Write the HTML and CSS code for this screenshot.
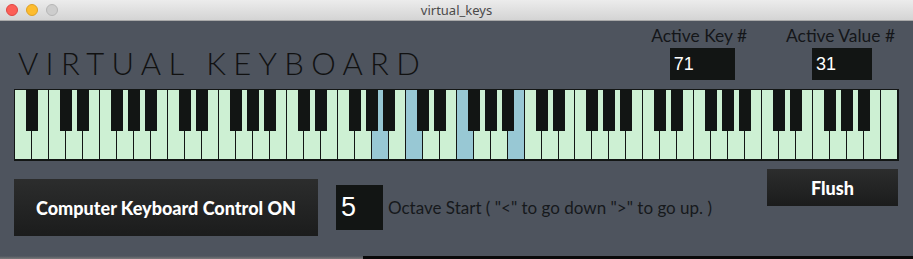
FILE: index.html
```html
<!DOCTYPE html>
<html lang="en">
<head>
    <meta charset="UTF-8">
    <title>virtual_keys</title>
    <link rel="stylesheet" href="styles.css">
</head>
<body>

    <!-- Fensterleiste -->
    <div class="titlebar">
        <div class="lights">
            <span class="light red"></span>
            <span class="light yellow"></span>
            <span class="light gray"></span>
        </div>
        <div class="title">virtual_keys</div>
    </div>

    <div class="main">
        <div class="top-row">
            <h1 class="heading">VIRTUAL KEYBOARD</h1>
            <div class="readouts">
                <div class="readout">
                    <div class="readout-label">Active Key #</div>
                    <div class="readout-box key-box">71</div>
                </div>
                <div class="readout">
                    <div class="readout-label">Active Value #</div>
                    <div class="readout-box value-box">31</div>
                </div>
            </div>
        </div>

        <!-- Tasten werden per Script erzeugt -->
        <div id="keyboard" class="keyboard"></div>

        <div class="bottom-row">
            <div class="control-group">
                <button class="dark-button control-button">Computer Keyboard Control ON</button>
                <div class="octave-box">5</div>
                <span class="octave-text">Octave Start ( "&lt;" to go down "&gt;" to go up. )</span>
            </div>
            <button class="dark-button flush-button">Flush</button>
        </div>
    </div>

    <div class="bottom-edge">
        <div class="edge-left"></div>
        <div class="edge-right"></div>
    </div>

    <script>
        // 88 Tasten, Start bei A0: 52 weisse Tasten
        var whiteNotes = ['A', 'B', 'C', 'D', 'E', 'F', 'G'];
        var withBlack = ['A', 'C', 'D', 'F', 'G'];
        var active = [21, 23, 26, 29];
        var keyboard = document.getElementById('keyboard');

        for (var i = 0; i < 52; i++) {
            var note = whiteNotes[i % 7];
            var key = document.createElement('div');
            key.className = 'white-key';
            if (active.indexOf(i) !== -1) {
                key.classList.add('active');
            }
            if (withBlack.indexOf(note) !== -1 && i < 51) {
                var black = document.createElement('div');
                black.className = 'black-key';
                key.appendChild(black);
            }
            keyboard.appendChild(key);
        }
    </script>

</body>
</html>
```

FILE: styles.css
```css
body {
    margin: 0;
    padding: 0;
    width: 913px;
    height: 259px;
    overflow: hidden;
    background-color: #4e545e;
    font-family: 'Lato', 'Liberation Sans', sans-serif;
}

/* Fensterleiste */
.titlebar {
    height: 20px;
    background: linear-gradient(#ececec, #d4d4d4);
    border-bottom: 1px solid #a9a9a9;
    position: relative;
    display: flex;
    align-items: center;
    justify-content: center;
}

.lights {
    position: absolute;
    left: 6px;
    top: 4px;
    display: flex;
    gap: 8px;
}

.light {
    width: 12px;
    height: 12px;
    border-radius: 50%;
    box-sizing: border-box;
}

.red {
    background-color: #fc5f57;
    border: 1px solid #df4744;
}

.yellow {
    background-color: #fdbc2e;
    border: 1px solid #dea123;
}

.gray {
    background-color: #cdcdcd;
    border: 1px solid #b6b6b6;
}

.title {
    font-family: 'Noto Sans', sans-serif;
    font-size: 13px;
    color: #4a4a4a;
}

.main {
    height: 235px;
    padding: 0 14px;
}

.top-row {
    height: 68px;
    display: flex;
    justify-content: space-between;
    align-items: flex-end;
}

.heading {
    margin: 0 0 7px 4px;
    font-size: 31px;
    font-weight: 300;
    letter-spacing: 7.3px;
    line-height: 1.2;
    color: #111;
}

.readouts {
    display: flex;
    gap: 39px;
    margin: 0 4px 9px 0;
}

.readout {
    display: flex;
    flex-direction: column;
    align-items: center;
}

.readout-label {
    font-size: 17.4px;
    line-height: 22px;
    color: #141619;
    margin-bottom: 1px;
}

.readout-box {
    height: 32px;
    line-height: 32px;
    background-color: #121514;
    color: white;
    font-family: 'Liberation Sans', sans-serif;
    font-size: 18px;
    padding-left: 4px;
    box-sizing: border-box;
}

.key-box {
    width: 65px;
    margin-left: 6px;
}

.value-box {
    width: 60px;
    margin-left: 3px;
}

/* Klaviatur */
.keyboard {
    width: 885px;
    height: 72px;
    box-sizing: border-box;
    padding: 1px 2px 2px 1px;
    background-color: #131615;
    display: flex;
    gap: 1px;
}

.white-key {
    flex: 1;
    position: relative;
    background-color: #cdf0d3;
}

.white-key.active {
    background-color: #98c8d4;
}

.black-key {
    position: absolute;
    top: -1px;
    right: -7px;
    width: 12px;
    height: 42px;
    background-color: #121514;
    z-index: 1;
}

.bottom-row {
    display: flex;
    justify-content: space-between;
    align-items: flex-start;
    margin-top: 8px;
}

.control-group {
    display: flex;
    align-items: center;
    margin-top: 10px;
}

.dark-button {
    border: none;
    background: linear-gradient(#2c2d2d, #1b1c1c);
    color: white;
    font-family: 'Lato', sans-serif;
    font-weight: 900;
    font-size: 18px;
    padding: 0;
    cursor: pointer;
}

.control-button {
    width: 304px;
    height: 57px;
}

.octave-box {
    width: 47px;
    height: 45px;
    line-height: 45px;
    margin-left: 18px;
    padding-left: 5px;
    box-sizing: border-box;
    background-color: #121514;
    color: white;
    font-family: 'Liberation Sans', sans-serif;
    font-size: 27px;
}

.octave-text {
    margin-left: 5px;
    font-size: 17px;
    color: #16191c;
}

.flush-button {
    width: 131px;
    height: 37px;
    margin-right: 1px;
}

/* Unterer Fensterrand */
.bottom-edge {
    display: flex;
    height: 3px;
}

.edge-left {
    width: 363px;
    background: linear-gradient(#4e545e, #7a7a7a);
}

.edge-right {
    flex: 1;
    background-color: #0a0a0a;
}
```
